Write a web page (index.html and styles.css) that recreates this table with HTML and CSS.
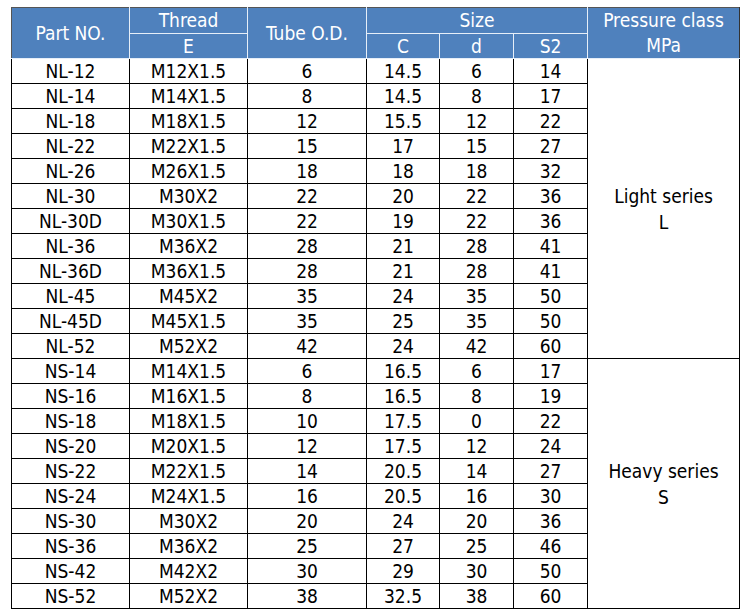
FILE: index.html
```html
<!DOCTYPE html>
<html>
<head>
<meta charset="utf-8">
<link rel="stylesheet" href="styles.css">
</head>
<body>
<table class="spec">
  <colgroup>
    <col class="c-part"><col class="c-thread"><col class="c-tube"><col class="c-c"><col class="c-d"><col class="c-s2"><col class="c-press">
  </colgroup>
  <thead>
    <tr class="h1">
      <th rowspan="2">Part NO.</th>
      <th>Thread</th>
      <th rowspan="2">Tube O.D.</th>
      <th colspan="3">Size</th>
      <th rowspan="2" class="press">Pressure class<br>MPa</th>
    </tr>
    <tr class="h2">
      <th>E</th>
      <th>C</th>
      <th>d</th>
      <th>S2</th>
    </tr>
  </thead>
  <tbody>
    <tr><td>NL-12</td><td>M12X1.5</td><td>6</td><td>14.5</td><td>6</td><td>14</td><td rowspan="12" class="series">Light series<br>L</td></tr>
    <tr><td>NL-14</td><td>M14X1.5</td><td>8</td><td>14.5</td><td>8</td><td>17</td></tr>
    <tr><td>NL-18</td><td>M18X1.5</td><td>12</td><td>15.5</td><td>12</td><td>22</td></tr>
    <tr><td>NL-22</td><td>M22X1.5</td><td>15</td><td>17</td><td>15</td><td>27</td></tr>
    <tr><td>NL-26</td><td>M26X1.5</td><td>18</td><td>18</td><td>18</td><td>32</td></tr>
    <tr><td>NL-30</td><td>M30X2</td><td>22</td><td>20</td><td>22</td><td>36</td></tr>
    <tr><td>NL-30D</td><td>M30X1.5</td><td>22</td><td>19</td><td>22</td><td>36</td></tr>
    <tr><td>NL-36</td><td>M36X2</td><td>28</td><td>21</td><td>28</td><td>41</td></tr>
    <tr><td>NL-36D</td><td>M36X1.5</td><td>28</td><td>21</td><td>28</td><td>41</td></tr>
    <tr><td>NL-45</td><td>M45X2</td><td>35</td><td>24</td><td>35</td><td>50</td></tr>
    <tr><td>NL-45D</td><td>M45X1.5</td><td>35</td><td>25</td><td>35</td><td>50</td></tr>
    <tr><td>NL-52</td><td>M52X2</td><td>42</td><td>24</td><td>42</td><td>60</td></tr>
    <tr><td>NS-14</td><td>M14X1.5</td><td>6</td><td>16.5</td><td>6</td><td>17</td><td rowspan="10" class="series">Heavy series<br>S</td></tr>
    <tr><td>NS-16</td><td>M16X1.5</td><td>8</td><td>16.5</td><td>8</td><td>19</td></tr>
    <tr><td>NS-18</td><td>M18X1.5</td><td>10</td><td>17.5</td><td>0</td><td>22</td></tr>
    <tr><td>NS-20</td><td>M20X1.5</td><td>12</td><td>17.5</td><td>12</td><td>24</td></tr>
    <tr><td>NS-22</td><td>M22X1.5</td><td>14</td><td>20.5</td><td>14</td><td>27</td></tr>
    <tr><td>NS-24</td><td>M24X1.5</td><td>16</td><td>20.5</td><td>16</td><td>30</td></tr>
    <tr><td>NS-30</td><td>M30X2</td><td>20</td><td>24</td><td>20</td><td>36</td></tr>
    <tr><td>NS-36</td><td>M36X2</td><td>25</td><td>27</td><td>25</td><td>46</td></tr>
    <tr><td>NS-42</td><td>M42X2</td><td>30</td><td>29</td><td>30</td><td>50</td></tr>
    <tr><td>NS-52</td><td>M52X2</td><td>38</td><td>32.5</td><td>38</td><td>60</td></tr>
  </tbody>
</table>
</body>
</html>
```
FILE: styles.css
```css
html, body {
  margin: 0;
  padding: 0;
  background: #ffffff;
}
body {
  padding: 7px 0 0 11px;
  font-family: "DejaVu Sans Condensed", "DejaVu Sans", Verdana, sans-serif;
  font-stretch: condensed;
  font-size: 19px;
  color: #000;
}
.spec {
  border-collapse: collapse;
  table-layout: fixed;
  width: 728px;
}
.c-part { width: 118px; }
.c-thread { width: 118px; }
.c-tube { width: 119px; }
.c-c { width: 73px; }
.c-d { width: 74px; }
.c-s2 { width: 74px; }
.c-press { width: 152px; }

.spec th {
  background: #4f81bd;
  color: #ffffff;
  font-weight: normal;
  border: 1px solid #e6eef8;
  padding: 0;
  text-align: center;
  vertical-align: middle;
  line-height: 24px;
  white-space: nowrap;
}
.spec thead tr.h1 th {
  border-top: 1px solid #555;
}
.spec thead tr th:first-child {
  border-left: 1px solid #555;
}
.spec th.press {
  border-right: 1px solid #333;
  line-height: 25px;
}
.spec thead tr.h1 { height: 25px; }
.spec thead tr.h2 { height: 24px; }
.spec tbody tr { height: 25px; }
.spec td {
  border: 1px solid #000;
  padding: 0;
  text-align: center;
  vertical-align: middle;
  line-height: 22px;
  white-space: nowrap;
}
.spec td.series {
  line-height: 26px;
}
```
